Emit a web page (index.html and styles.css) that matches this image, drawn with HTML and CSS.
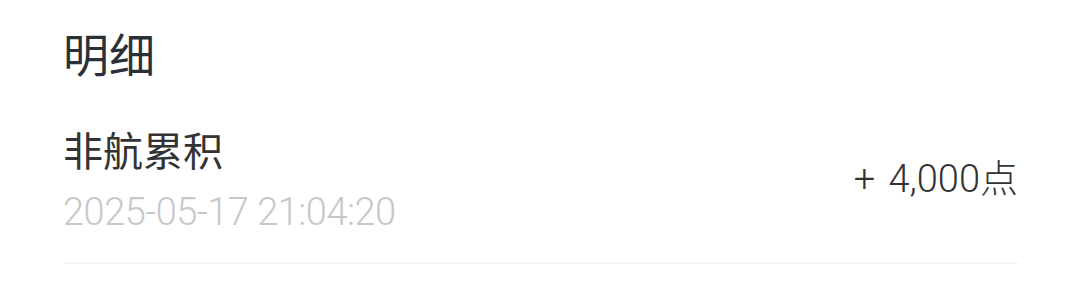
FILE: index.html
```html
<!DOCTYPE html>
<html lang="zh-CN">
<head>
    <meta charset="UTF-8">
    <meta name="viewport" content="width=device-width, initial-scale=1.0">
    <title>明细</title>
    <link rel="stylesheet" href="styles.css">
</head>
<body>
    <div class="page">
        <h1 class="title">明细</h1>

        <div class="record">
            <div class="record-info">
                <div class="record-name">非航累积</div>
                <div class="record-time">2025-05-17 21:04:20</div>
            </div>
            <div class="record-amount">+ 4,000点</div>
        </div>
    </div>
</body>
</html>
```

FILE: styles.css
```css
body {
    font-family: Roboto, "Noto Sans CJK SC", sans-serif;
    background-color: #fff;
    color: #333;
    margin: 0;
    padding: 0;
}

.page {
    padding: 0 62px 0 63px;
}

.title {
    font-family: "Noto Sans CJK SC", sans-serif;
    font-size: 46px;
    font-weight: 400;
    line-height: 52px;
    color: #2b3038;
    margin: 26px 0 0 0;
}

.record {
    display: flex;
    justify-content: space-between;
    align-items: center;
    padding: 47px 0 28px 0;
    border-bottom: 2px solid #f6f6f6;
}

.record-name {
    font-family: "Noto Sans CJK SC", sans-serif;
    font-size: 40px;
    line-height: 48px;
    color: #333;
}

.record-time {
    font-size: 38px;
    font-weight: 300;
    line-height: 44px;
    letter-spacing: -0.5px;
    color: #c8c8c8;
    margin-top: 17px;
}

.record-amount {
    font-size: 38px;
    font-weight: 300;
    color: #333;
    word-spacing: 4px;
    margin-bottom: 8px;
}
```
